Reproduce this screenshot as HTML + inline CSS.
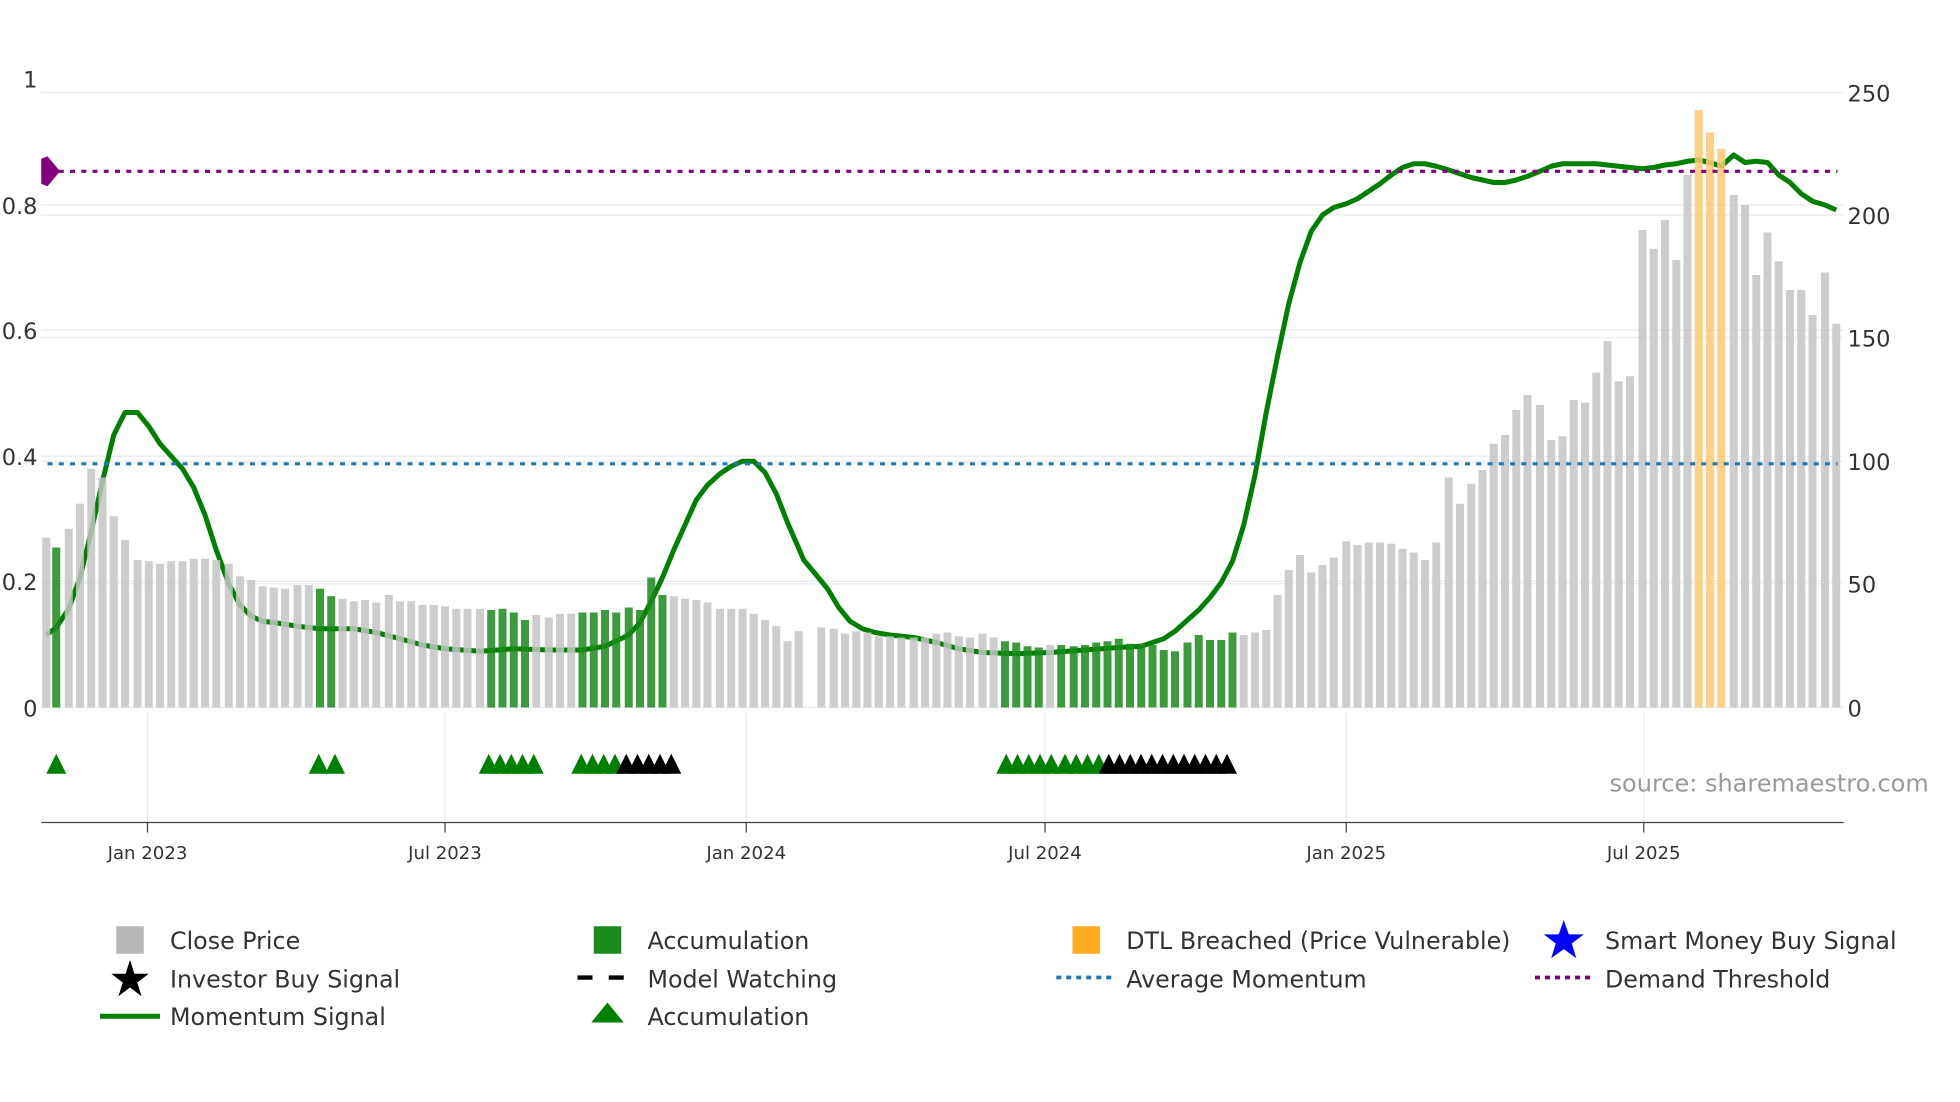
<!DOCTYPE html>
<html><head><meta charset="utf-8">
<style>
html,body{margin:0;padding:0;background:#fff;width:1960px;height:1102px;overflow:hidden}
svg{display:block}
text{font-family:"DejaVu Sans","Liberation Sans",sans-serif;fill:#333}
</style></head>
<body>
<svg id="s" width="1960" height="1102" viewBox="0 0 1568 881.6" xmlns="http://www.w3.org/2000/svg">
<g stroke="#eceef1" stroke-width="1.2">
<line x1="33" x2="1475" y1="74" y2="74"/>
<line x1="33" x2="1475" y1="164" y2="164"/>
<line x1="33" x2="1475" y1="172" y2="172"/>
<line x1="33" x2="1475" y1="264" y2="264"/>
<line x1="33" x2="1475" y1="270" y2="270"/>
<line x1="33" x2="1475" y1="365" y2="365"/>
<line x1="33" x2="1475" y1="369" y2="369"/>
<line x1="33" x2="1475" y1="465" y2="465"/>
<line x1="33" x2="1475" y1="467" y2="467"/>
<line x1="33" x2="1475" y1="566" y2="566"/>
<line x1="118" x2="118" y1="570" y2="658"/>
<line x1="356" x2="356" y1="570" y2="658"/>
<line x1="597" x2="597" y1="570" y2="658"/>
<line x1="836" x2="836" y1="570" y2="658"/>
<line x1="1077" x2="1077" y1="570" y2="658"/>
<line x1="1315" x2="1315" y1="570" y2="658"/>
</g>
<g font-size="18">
<text x="30" y="70" text-anchor="end">1</text>
<text x="30" y="171" text-anchor="end">0.8</text>
<text x="30" y="271" text-anchor="end">0.6</text>
<text x="30" y="372" text-anchor="end">0.4</text>
<text x="30" y="472" text-anchor="end">0.2</text>
<text x="30" y="573" text-anchor="end">0</text>
<text x="1478" y="81">250</text>
<text x="1478" y="179">200</text>
<text x="1478" y="277">150</text>
<text x="1478" y="376">100</text>
<text x="1478" y="474">50</text>
<text x="1478" y="573">0</text>
</g>
<g id="line"></g>
<g id="bars"></g>
<line x1="38" x2="1470" y1="137" y2="137" stroke="#800080" stroke-width="2.5" stroke-dasharray="4,5"/>
<path d="M33,127 L38,125 L48,137 L38,149 L33,147Z" fill="#800080"/>
<line x1="38" x2="1470" y1="371" y2="371" stroke="#1f77b4" stroke-width="2.5" stroke-dasharray="4,5"/>
<g id="tri"></g>
<line x1="33" x2="1475" y1="658" y2="658" stroke="#444" stroke-width="1"/>
<g stroke="#444" stroke-width="1">
<line x1="118" x2="118" y1="658" y2="666"/><line x1="356" x2="356" y1="658" y2="666"/>
<line x1="597" x2="597" y1="658" y2="666"/><line x1="836" x2="836" y1="658" y2="666"/>
<line x1="1077" x2="1077" y1="658" y2="666"/><line x1="1315" x2="1315" y1="658" y2="666"/>
</g>
<g font-size="14.5" text-anchor="middle">
<text x="118" y="687">Jan 2023</text><text x="356" y="687">Jul 2023</text>
<text x="597" y="687">Jan 2024</text><text x="836" y="687">Jul 2024</text>
<text x="1077" y="687">Jan 2025</text><text x="1315" y="687">Jul 2025</text>
</g>
<text x="1543" y="633" font-size="19.2" text-anchor="end" style="fill:#999">source: sharemaestro.com</text>
<g font-size="19">
<rect x="93" y="741" width="22" height="22" fill="#b8b8b8"/>
<text x="136" y="759">Close Price</text>
<path d="M104,768 L107.5,779 L119,779 L109.8,786 L113.3,797 L104,790 L94.7,797 L98.2,786 L89,779 L100.5,779Z" fill="#000"/>
<text x="136" y="790">Investor Buy Signal</text>
<line x1="80" x2="128" y1="813" y2="813" stroke="#008000" stroke-width="4"/>
<text x="136" y="820">Momentum Signal</text>
<rect x="475" y="741" width="22" height="22" fill="#1a8a1a"/>
<text x="518" y="759">Accumulation</text>
<line x1="462" x2="507" y1="782" y2="782" stroke="#000" stroke-width="3.5" stroke-dasharray="12,13"/>
<text x="518" y="790">Model Watching</text>
<path d="M486,802 L499,818 L473,818Z" fill="#008000"/>
<text x="518" y="820">Accumulation</text>
<rect x="858" y="741" width="22" height="22" fill="#ffad1f"/>
<text x="901" y="759">DTL Breached (Price Vulnerable)</text>
<line x1="845" x2="890" y1="782" y2="782" stroke="#1f77b4" stroke-width="3" stroke-dasharray="4,4"/>
<text x="901" y="790">Average Momentum</text>
<path d="M1251,736 L1255,747.5 L1267,747.5 L1257.4,754.8 L1261,766.5 L1251,759.3 L1241,766.5 L1244.6,754.8 L1235,747.5 L1247,747.5Z" fill="#0000ff"/>
<text x="1284" y="759">Smart Money Buy Signal</text>
<line x1="1228" x2="1273" y1="782" y2="782" stroke="#800080" stroke-width="3" stroke-dasharray="4,4"/>
<text x="1284" y="790">Demand Threshold</text>
</g>
</svg>
<script>
var NS="http://www.w3.org/2000/svg";
function el(p,t,a){var e=document.createElementNS(NS,t);for(var k in a)e.setAttribute(k,a[k]);p.appendChild(e);return e;}
var B=[[37,430],[45,438,'g'],[55,423],[64,403],[73,375],[82,382],[91,413],[100,432],[110,448],[119,449],[128,451],[137,449],[146,449],[155,447],[164,447],[173,448],[183,451],[192,461],[201,464],[210,469],[219,470],[228,471],[238,468],[247,468],[256,471,'g'],[265,477,'g'],[274,479],[283,481],[292,480],[301,482],[311,476],[320,481],[329,481],[338,484],[347,484],[356,485],[365,487],[374,487],[384,487],[393,488,'g'],[402,487,'g'],[411,490,'g'],[420,496,'g'],[429,492],[439,494],[448,491],[457,491],[466,490,'g'],[475,490,'g'],[484,488,'g'],[493,490,'g'],[503,486,'g'],[512,488,'g'],[521,462,'g'],[530,476,'g'],[539,477],[548,479],[557,480],[566,482],[576,487],[585,487],[594,487],[603,491],[612,496],[621,501],[630,513],[639,505],[657,502],[667,503],[676,507],[685,505],[694,506],[703,509],[712,509],[721,510],[731,510],[740,510],[749,507],[758,506],[767,509],[776,510],[786,507],[795,510],[804,513,'g'],[813,514,'g'],[822,517,'g'],[831,518,'g'],[840,516],[849,516,'g'],[859,517,'g'],[868,516,'g'],[877,514,'g'],[886,513,'g'],[895,511,'g'],[904,515,'g'],[913,515,'g'],[922,516,'g'],[931,520,'g'],[940,521,'g'],[950,514,'g'],[959,508,'g'],[968,512,'g'],[977,512,'g'],[986,506,'g'],[995,508],[1004,506],[1013,504],[1022,476],[1031,456],[1040,444],[1049,458],[1058,452],[1067,446],[1077,433],[1086,436],[1095,434],[1104,434],[1113,435],[1122,439],[1131,442],[1140,448],[1149,434],[1159,382],[1168,403],[1177,387],[1186,376],[1195,355],[1204,348],[1213,328],[1222,316],[1232,324],[1241,352],[1250,349],[1259,320],[1268,322],[1277,298],[1286,273],[1295,305],[1304,301],[1314,184],[1323,199],[1332,176],[1341,208],[1350,140],[1359,88,'o'],[1368,106,'o'],[1377,119,'o'],[1387,156],[1396,164],[1405,220],[1414,186],[1423,209],[1432,232],[1441,232],[1450,252],[1460,218],[1469,259]];
var bg=document.getElementById('bars');
B.forEach(function(b){var c=b[2]=='g'?'#1a8a1a':b[2]=='o'?'#ffc870':'#c4c4c4';
el(bg,'rect',{x:b[0]-3.2,y:b[1],width:6.4,height:566-b[1],fill:c,'fill-opacity':0.85});});
var L=[[37,508],[45,502],[55,487],[64,462],[73,425],[82,385],[91,348],[100,330],[110,330],[119,341],[128,355],[137,365],[146,375],[155,390],[164,412],[173,440],[183,467],[192,484],[201,493],[210,497],[219,498],[238,501],[256,503],[283,503],[301,506],[320,511],[338,516],[356,519],[384,521],[411,519],[439,520],[466,520],[484,517],[503,508],[512,498],[521,481],[530,462],[539,440],[548,420],[557,400],[566,388],[576,379],[585,373],[594,369],[603,369],[612,378],[621,395],[630,418],[643,448],[653,460],[662,471],[671,486],[680,497],[690,503],[700,506],[712,508],[731,510],[749,514],[767,519],[786,522],[813,523],[840,522],[868,520],[895,518],[913,517],[931,511],[940,505],[950,496],[959,488],[968,478],[977,466],[986,449],[995,420],[1004,380],[1013,330],[1022,285],[1031,243],[1040,210],[1049,185],[1058,172],[1067,166],[1077,163],[1086,159],[1095,153],[1104,147],[1113,140],[1122,134],[1131,131],[1140,131],[1149,133],[1159,136],[1168,139],[1177,142],[1186,144],[1195,146],[1204,146],[1213,144],[1222,141],[1232,137],[1241,133],[1250,131],[1259,131],[1268,131],[1277,131],[1286,132],[1295,133],[1304,134],[1314,135],[1323,134],[1332,132],[1341,131],[1350,129],[1359,128],[1368,130],[1377,133],[1387,124],[1396,130],[1405,129],[1414,130],[1423,140],[1432,146],[1441,155],[1450,161],[1460,164],[1469,168]];
el(document.getElementById('line'),'polyline',{points:L.map(function(p){return p.join(',')}).join(' '),fill:'none',stroke:'#008000','stroke-width':4,'stroke-linejoin':'round'});
var tg=document.getElementById('tri');
function tri(x,c){el(tg,'path',{d:'M'+x+',603 L'+(x+8)+',619 L'+(x-8)+',619Z',fill:c});}
[45,255,268,391,400,409,418,427,465,474,483,492,805,814,823,832,841,852,861,870,879].forEach(function(x){tri(x,'#008000')});
[501,510,519,528,537].forEach(function(x){tri(x,'#000')});
for(var x=887;x<=990;x+=8.6)tri(x,'#000');
</script>
</body></html>
